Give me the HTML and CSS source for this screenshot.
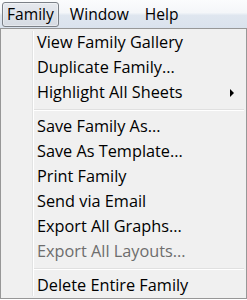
FILE: index.html
```html
<!DOCTYPE html>
<html lang="en">
<head>
  <meta charset="UTF-8">
  <title>Family menu</title>
  <link rel="stylesheet" href="styles.css">
</head>
<body>

  <!-- Menu bar -->
  <div class="menu-bar">
    <span class="menu-title open">Family</span>
    <span class="menu-title">Window</span>
    <span class="menu-title">Help</span>
  </div>

  <!-- Family dropdown -->
  <div class="dropdown">
    <div class="item">View Family Gallery</div>
    <div class="item">Duplicate Family...</div>
    <div class="item has-sub">Highlight All Sheets <span class="arrow"></span></div>
    <div class="separator"></div>
    <div class="item">Save Family As...</div>
    <div class="item">Save As Template...</div>
    <div class="item">Print Family</div>
    <div class="item">Send via Email</div>
    <div class="item">Export All Graphs...</div>
    <div class="item disabled">Export All Layouts...</div>
    <div class="separator"></div>
    <div class="item">Delete Entire Family</div>
  </div>

</body>
</html>
```

FILE: styles.css
```css
body {
  margin: 0;
  padding: 0;
  font-family: 'Open Sans', 'Noto Sans', sans-serif;
  font-size: 16.3px;
  color: #000;
  background: #fff;
}

/* Menu bar */
.menu-bar {
  height: 28px;
  display: flex;
  align-items: center;
  padding-left: 2px;
  font-size: 15.6px;
  background: linear-gradient(#fbfcfd 0%, #f4f6f9 45%, #dfe6ef 55%, #dae2ed 100%);
}

.menu-title {
  height: 23px;
  line-height: 23px;
  padding: 0 4px;
  margin-right: 6px;
  border: 1px solid transparent;
  border-radius: 3px;
}

.menu-title.open {
  border-color: #7b8087;
  background: linear-gradient(#e6e9ee, #d6dbe3);
  box-shadow: inset 0 0 0 1px rgba(255,255,255,0.4);
}

/* Dropdown */
.dropdown {
  width: 245px;
  height: 268px;
  border: 1px solid #979797;
  background: #f0f0f0;
  padding-top: 1px;
  box-sizing: content-box;
  position: relative;
}

.dropdown::before {
  content: "";
  position: absolute;
  top: 2px;
  bottom: 2px;
  left: 31px;
  width: 1px;
  background: #e2e3e3;
  box-shadow: 1px 0 0 #fff;
}

.item {
  height: 25px;
  line-height: 25px;
  padding-left: 36px;
  position: relative;
  white-space: nowrap;
}

.item.disabled {
  color: #6d6d6d;
}

.arrow {
  position: absolute;
  right: 12px;
  top: 9px;
  width: 0;
  height: 0;
  border-top: 4px solid transparent;
  border-bottom: 4px solid transparent;
  border-left: 4px solid #000;
}

.separator {
  height: 1px;
  margin: 4px 2px 3px 33px;
  background: #e0e0e0;
  border-bottom: 1px solid #fff;
}
```
